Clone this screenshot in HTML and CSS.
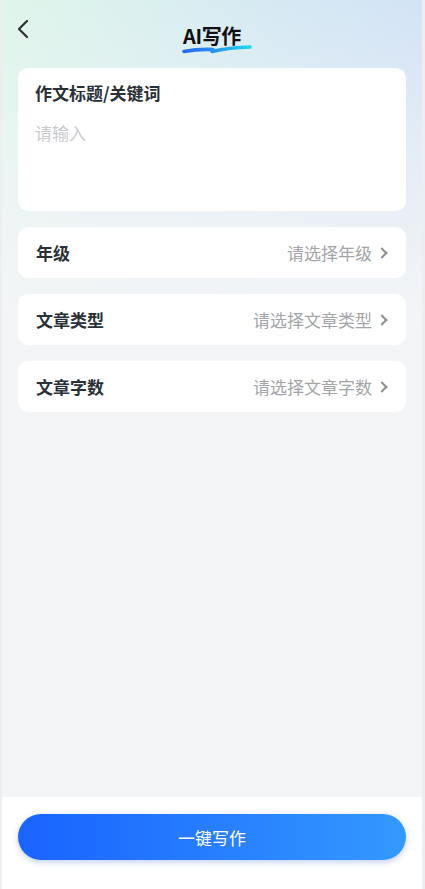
FILE: index.html
```html
<!DOCTYPE html>
<html lang="zh-CN">
<head>
<meta charset="UTF-8">
<meta name="viewport" content="width=device-width, initial-scale=1.0">
<title>AI写作</title>
<link rel="stylesheet" href="styles.css">
</head>
<body>
<div class="page">
<header class="topbar">
<svg class="back" width="14" height="20" viewBox="0 0 14 20"><polyline points="11,2 3,10 11,18" fill="none" stroke="#2b3035" stroke-width="2.2" stroke-linecap="round" stroke-linejoin="round"/></svg>
<div class="title">
<span>AI写作</span>
<svg class="underline" width="76" height="10" viewBox="0 0 76 10">
<defs><linearGradient id="ul" x1="0" x2="1" y1="0" y2="0"><stop offset="0" stop-color="#2a66f0"/><stop offset="0.5" stop-color="#2598f0"/><stop offset="1" stop-color="#1ed6f0"/></linearGradient></defs>
<path d="M5 7.5 Q18 5 34 5.5 L33 7.5 Q50 3.5 71 3" fill="none" stroke="url(#ul)" stroke-width="3.6" stroke-linecap="round" stroke-linejoin="round"/>
</svg>
</div>
</header>

<main class="content">
<section class="card topic">
<h2>作文标题/关键词</h2>
<p class="placeholder">请输入</p>
</section>
<div class="card row"><span class="label">年级</span><span class="pick">请选择年级<i class="arrow"></i></span></div>
<div class="card row"><span class="label">文章类型</span><span class="pick">请选择文章类型<i class="arrow"></i></span></div>
<div class="card row"><span class="label">文章字数</span><span class="pick">请选择文章字数<i class="arrow"></i></span></div>
</main>

<footer class="bottom">
<button class="write">一键写作</button>
</footer>
</div>
</body>
</html>
```

FILE: styles.css
```css
*{margin:0;padding:0;box-sizing:border-box;}
html,body{height:100%;background:#eceef0;font-family:"Noto Sans CJK SC","Noto Sans",sans-serif;}
.page{margin:0 3px 0 2px;min-height:889px;display:flex;flex-direction:column;
 background:linear-gradient(to bottom,rgba(244,245,247,0) 0,rgba(244,245,247,0.6) 170px,#f4f5f7 330px),linear-gradient(100deg,#dff6ea 0%,#d6eaf3 45%,#cfdcf9 100%);
 background-color:#f4f5f7;}
.topbar{height:68px;position:relative;display:flex;justify-content:center;}
.back{position:absolute;left:14px;top:19px;}
.title{position:relative;margin-top:21px;height:34px;}
.title span{font-size:20px;font-weight:700;color:#111;letter-spacing:-0.4px;line-height:30px;display:block;position:relative;z-index:1;}
.underline{position:absolute;left:-4px;top:23px;z-index:0;}
.content{padding:0 16px;display:flex;flex-direction:column;gap:16px;}
.card{background:#fff;border-radius:10px;}
.topic{height:143px;padding:13px 17px;}
.topic h2{font-size:17px;font-weight:700;color:#2a3037;line-height:24px;}
.placeholder{margin-top:16px;font-size:17px;color:#c9cbcf;line-height:24px;}
.row{height:51px;padding:0 17px 0 18px;display:flex;align-items:center;justify-content:space-between;}
.label{font-size:17px;font-weight:700;color:#2a3037;}
.pick{font-size:17px;color:#a3a5a9;display:flex;align-items:center;}
.arrow{display:inline-block;width:8px;height:8px;border-top:2.4px solid #8e9095;border-right:2.4px solid #8e9095;transform:rotate(45deg);margin-left:6px;margin-right:3px;}
.bottom{margin-top:auto;background:#fff;height:92px;padding:17px 16px 0;}
.write{width:100%;height:46px;border:none;border-radius:23px;background:linear-gradient(90deg,#1a63ff,#3399ff);color:#fff;font-size:17px;font-family:inherit;box-shadow:0 2px 6px rgba(40,90,200,0.3);}
```
